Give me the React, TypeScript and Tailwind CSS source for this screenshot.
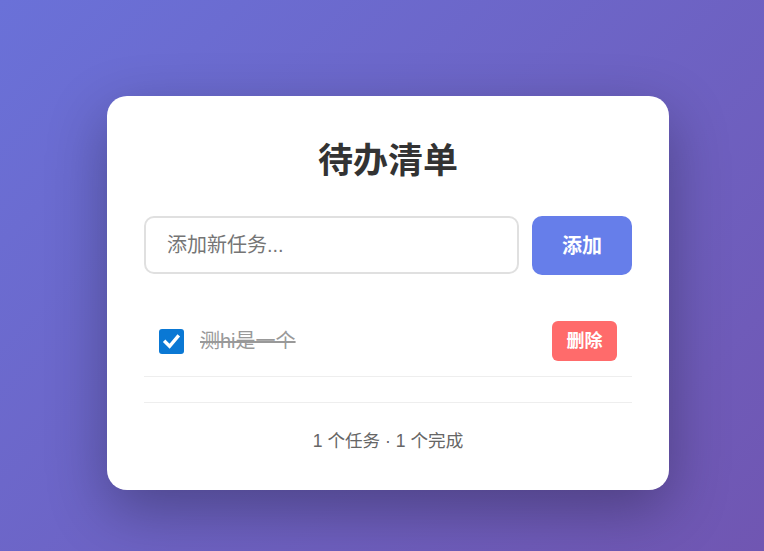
import { useState } from "react";

type Todo = {
  id: number;
  text: string;
  done: boolean;
};

const App = () => {
  const [todos, setTodos] = useState<Todo[]>([
    { id: 1, text: "测hi是一个", done: true },
  ]);
  const [value, setValue] = useState("");

  const addTodo = () => {
    if (!value.trim()) return;
    setTodos([...todos, { id: Date.now(), text: value.trim(), done: false }]);
    setValue("");
  };

  const doneCount = todos.filter((t) => t.done).length;

  return (
    <div className="min-h-screen w-full bg-[linear-gradient(135deg,#6a71d8_0%,#7056b2_100%)] font-['Liberation_Sans','Noto_Sans_CJK_SC',sans-serif] flex justify-center items-start pt-[96px] pl-[12px]">
      <div className="w-[562px] bg-white rounded-[20px] pt-[44px] px-[37px] pb-[36px] shadow-[0_20px_60px_rgba(0,0,0,0.3)]">
        <h1 className="text-center text-[35px] leading-[42px] font-bold text-[#333] mb-[34px]">
          待办清单
        </h1>

        <div className="flex gap-[13px]">
          <input
            value={value}
            onChange={(e) => setValue(e.target.value)}
            onKeyDown={(e) => e.key === "Enter" && addTodo()}
            placeholder="添加新任务..."
            className="flex-1 h-[58px] border-2 border-[#e0e0e0] rounded-[10px] pl-[21px] text-[20px] text-[#333] placeholder:text-[#757575] outline-none"
          />
          <button
            onClick={addTodo}
            className="w-[100px] h-[59px] bg-[#667eea] text-white text-[20px] font-semibold rounded-[10px]"
          >
            添加
          </button>
        </div>

        <ul className="mt-[31px]">
          {todos.map((todo) => (
            <li
              key={todo.id}
              className="flex items-center px-[15px] py-[15px] border-b border-[#eee]"
            >
              <button
                onClick={() =>
                  setTodos(
                    todos.map((t) =>
                      t.id === todo.id ? { ...t, done: !t.done } : t
                    )
                  )
                }
                className={`w-[25px] h-[25px] rounded-[3px] flex items-center justify-center ${
                  todo.done ? "bg-[#0a78d4]" : "border-2 border-[#767676] bg-white"
                }`}
              >
                {todo.done && (
                  <svg width="19" height="19" viewBox="0 0 20 20">
                    <path
                      d="M3.5 10.5 L8 15 L16.5 5"
                      fill="none"
                      stroke="white"
                      strokeWidth="3.6"
                      strokeLinecap="square"
                    />
                  </svg>
                )}
              </button>
              <span
                className={`ml-[16px] flex-1 text-[20px] leading-[28px] ${
                  todo.done ? "text-[#999] line-through" : "text-[#333]"
                }`}
              >
                {todo.text}
              </span>
              <button
                onClick={() => setTodos(todos.filter((t) => t.id !== todo.id))}
                className="w-[65px] h-[40px] bg-[#ff6b6b] text-white text-[18px] font-semibold rounded-[6px]"
              >
                删除
              </button>
            </li>
          ))}
        </ul>

        <div className="mt-[25px] border-t border-[#eee] pt-[25px] text-center text-[17.6px] leading-[26px] text-[#666]">
          {todos.length} 个任务 · {doneCount} 个完成
        </div>
      </div>
    </div>
  );
};

export default App;
